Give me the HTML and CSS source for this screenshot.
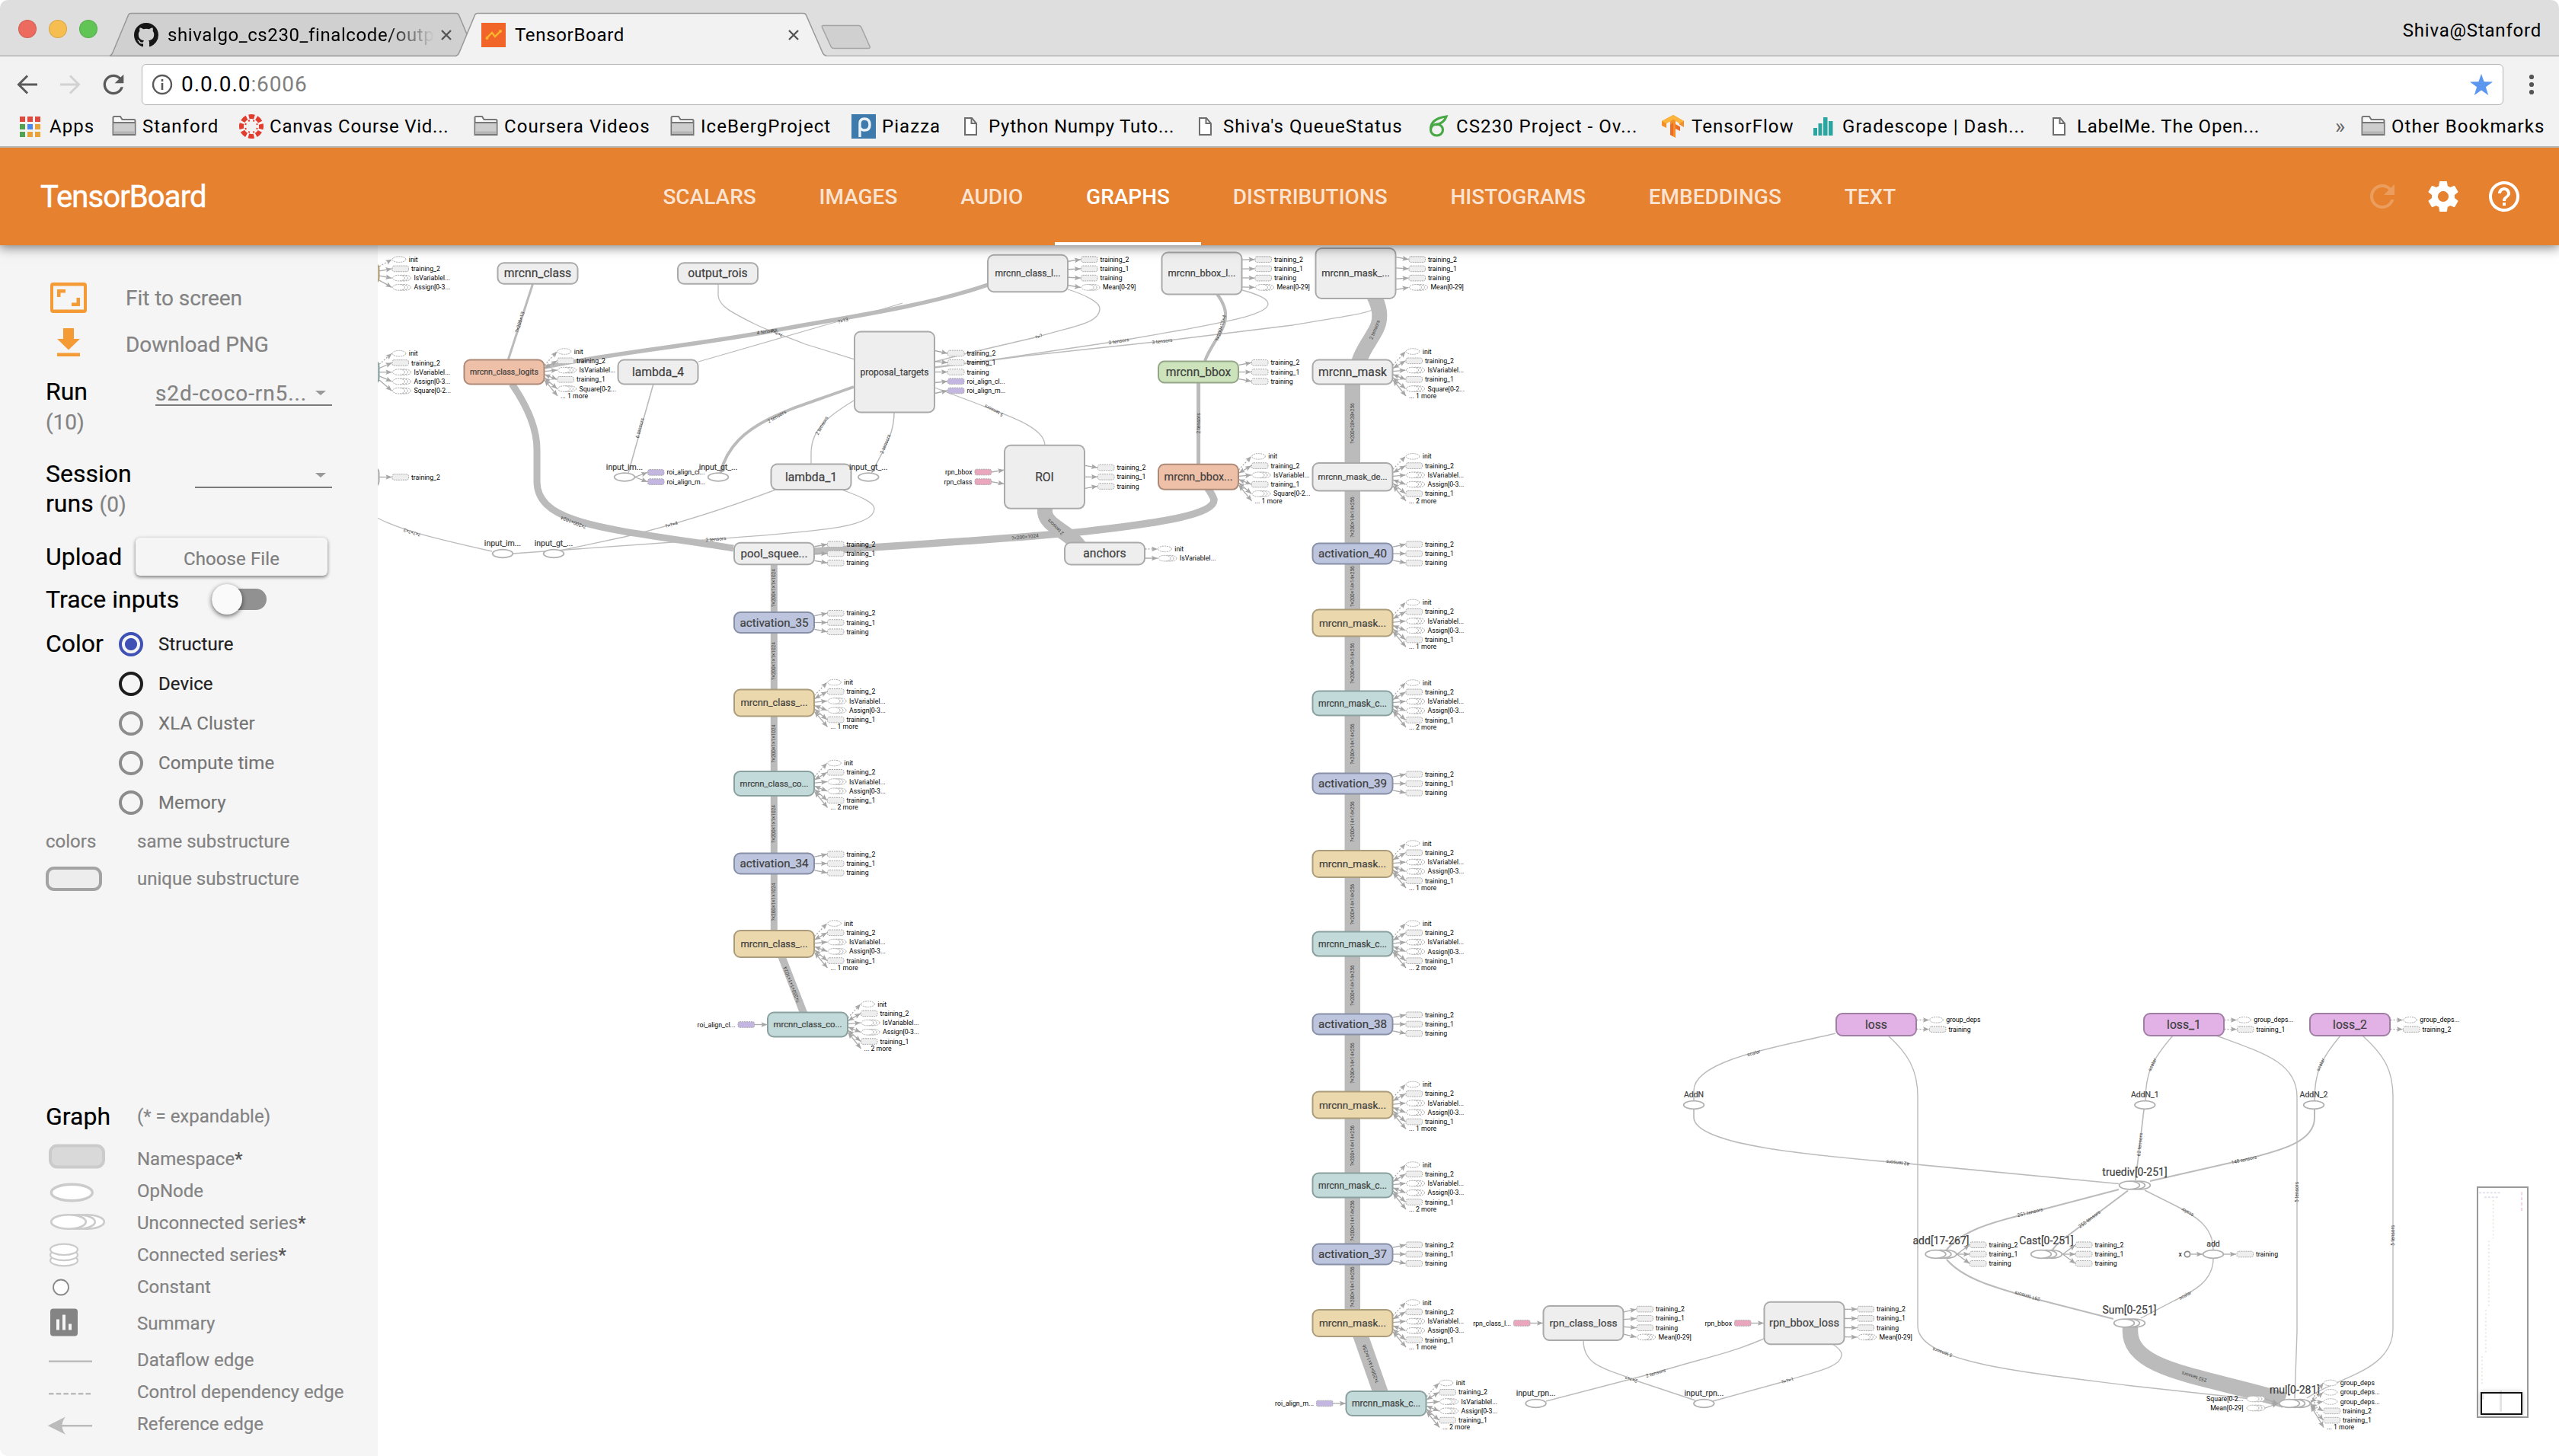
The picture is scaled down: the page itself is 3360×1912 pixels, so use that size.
FILE: index.html
```html
<!DOCTYPE html>
<html lang="en">
<head>
<meta charset="utf-8">
<title>TensorBoard</title>
<link rel="stylesheet" href="styles.css">
</head>
<body>
<svg class="defs" width="0" height="0" aria-hidden="true">
  <symbol id="folder" viewBox="0 0 32 32"><path d="M1.5 27V4.500Q1.500 3 3 3H11L13.500 7H29Q30.500 7 30.500 8.500V27Z" fill="#fafafa" stroke="#777" stroke-width="2"/><path d="M2.500 11H29.500V26H2.500Z" fill="#cdcdcd"/><path d="M2 11H30" stroke="#777" stroke-width="2"/><path d="M2.500 22.500H29.500V26H2.500Z" fill="#b5b5b5"/></symbol>
  <symbol id="page" viewBox="0 0 24 32"><path d="M1 5H10L16 12V27H1Z" fill="#fff" stroke="#6e6e6e" stroke-width="2"/><path d="M9.500 5V12H16" fill="none" stroke="#6e6e6e" stroke-width="2"/></symbol>
  <symbol id="refresh" viewBox="0 0 24 24"><path d="M17.65 6.350C16.200 4.900 14.210 4 12 4c-4.420 0-7.990 3.580-7.990 8s3.570 8 7.990 8c3.730 0 6.840-2.550 7.730-6h-2.080c-.82 2.330-3.040 4-5.650 4-3.310 0-6-2.690-6-6s2.690-6 6-6c1.660 0 3.140.69 4.220 1.780L13 11h7V4l-2.350 2.350z"/></symbol>
</svg>

<header class="chrome">
  <div class="tabstrip">
    <svg class="tab-shapes" viewBox="0 0 1200 75">
      <path d="M144 73.500Q147 72 148 69L168 21Q169 17.500 172 17.500H599Q602 17.500 603 21L625 73.500Z" fill="#d0d0d0" stroke="#989898" stroke-width="1.500"/>
      <path d="M1081 33.500H1127Q1130 33.500 1131 36L1142 61Q1143 63.500 1140 63.500H1095Q1092 63.500 1091 61L1079.500 36Q1078.500 33.500 1081 33.500Z" fill="#d0d0d0" stroke="#a4a4a4" stroke-width="1.500"/>
      <path d="M599 76V73.500Q602 72 603 69L623 21Q624 17.500 627 17.500H1055Q1058 17.500 1059 21L1080 69Q1081 72 1085 73.500V76Z" fill="#f2f2f2"/>
      <path d="M599 73.500Q602 72 603 69L623 21Q624 17.500 627 17.500H1055Q1058 17.500 1059 21L1080 69Q1081 72 1085 73.500" fill="none" stroke="#989898" stroke-width="1.500"/>
    </svg>
    <div class="lights"><i class="red"></i><i class="amber"></i><i class="green"></i></div>
    <div class="tab first">
      <svg width="32" height="32" viewBox="0 0 16 16"><path fill="#151515" d="M8 0C3.580 0 0 3.580 0 8c0 3.540 2.290 6.530 5.470 7.590.4.070.55-.17.55-.38 0-.19-.01-.82-.01-1.490-2.010.37-2.530-.49-2.690-.94-.09-.23-.48-.94-.82-1.130-.28-.15-.68-.52-.01-.53.63-.01 1.080.58 1.230.82.72 1.210 1.870.87 2.330.66.070-.52.28-.87.51-1.070-1.780-.2-3.640-.89-3.640-3.950 0-.87.31-1.590.82-2.150-.08-.2-.36-1.020.08-2.120 0 0 .67-.21 2.200.82.64-.18 1.320-.27 2-.27s1.360.09 2 .27c1.530-1.040 2.200-.82 2.200-.82.44 1.100.16 1.920.08 2.120.51.56.82 1.270.82 2.150 0 3.070-1.870 3.750-3.650 3.950.29.25.54.73.54 1.480 0 1.070-.01 1.930-.01 2.200 0 .21.15.46.55.38A8.010 8.010 0 0 0 16 8c0-4.420-3.580-8-8-8z"/></svg>
      <span class="title fade">shivalgo_cs230_finalcode/outp</span>
      <svg class="close" viewBox="0 0 14 14"><path d="M1 1L13 13M13 1L1 13" stroke="#555" stroke-width="2.400"/></svg>
    </div>
    <div class="tab second">
      <svg width="32" height="32" viewBox="0 0 32 32"><rect width="32" height="32" fill="#f26529"/><path d="M7 20L14 13L18 18L25 11" fill="none" stroke="#fcb72b" stroke-width="2.400"/><circle cx="7.500" cy="20" r="2" fill="#fcb72b"/><circle cx="25" cy="11" r="2" fill="#fcb72b"/></svg>
      <span class="title">TensorBoard</span>
      <svg class="close" viewBox="0 0 14 14"><path d="M1 1L13 13M13 1L1 13" stroke="#555" stroke-width="2.400"/></svg>
    </div>
    <span class="profile">Shiva@Stanford</span>
  </div>

  <div class="toolbar">
    <svg class="nav" viewBox="0 0 28 28"><path d="M27 14H3M14 2.500L2.500 14L14 25.500" fill="none" stroke="#5a5a5a" stroke-width="3"/></svg>
    <svg class="nav" viewBox="0 0 28 28"><path d="M1 14H25M14 2.500L25.500 14L14 25.500" fill="none" stroke="#d2d2d2" stroke-width="3"/></svg>
    <svg class="reload" viewBox="3 3 18 18" fill="#5a5a5a"><use href="#refresh" width="24" height="24"/></svg>
    <div class="omnibox">
      <svg width="28" height="28" viewBox="0 0 28 28"><circle cx="14" cy="14" r="12" fill="none" stroke="#5a5a5a" stroke-width="2.400"/><path d="M14 12V21M14 7V10" stroke="#5a5a5a" stroke-width="2.600"/></svg>
      <span class="url">0.0.0.0<em>:6006</em></span>
      <svg class="star" viewBox="0 0 30 28"><path fill="#5b97ee" d="M15 0L18.600 10.200L30 10.600L20.900 17.200L24.200 28L15 21.500L5.800 28L9.100 17.200L0 10.600L11.400 10.200Z"/></svg>
    </div>
    <svg class="dots" viewBox="0 0 8 28" fill="#555"><circle cx="4" cy="4" r="3.100"/><circle cx="4" cy="14" r="3.100"/><circle cx="4" cy="24" r="3.100"/></svg>
  </div>

  <nav class="bookmarks">
    <span class="bm"><svg width="31" height="32" viewBox="0 0 31 32"><path fill="#e0493e" d="M0 3h7v7H0zM10 3h7v7h-7zM20 3h7v7h-7z"/><path fill="#51a351" d="M0 13h7v7H0zM0 23h7v7H0z"/><path fill="#4a87ee" d="M10 13h7v7h-7z"/><path fill="#e8a33b" d="M20 13h7v7h-7zM10 23h7v7h-7zM20 23h7v7h-7z"/></svg>Apps</span>
    <span class="bm"><svg width="32" height="32"><use href="#folder"/></svg>Stanford</span>
    <span class="bm tight"><svg width="32" height="32" viewBox="0 0 32 32"><circle cx="16" cy="16" r="13" fill="none" stroke="#e23c2f" stroke-width="6" stroke-dasharray="7.200 3.010" stroke-dashoffset="3.600"/><circle cx="16" cy="16" r="8" fill="none" stroke="#e23c2f" stroke-width="2" stroke-dasharray="2 4.280" stroke-dashoffset="-2"/></svg>Canvas Course Vid...</span>
    <span class="bm"><svg width="32" height="32"><use href="#folder"/></svg>Coursera Videos</span>
    <span class="bm"><svg width="32" height="32"><use href="#folder"/></svg>IceBergProject</span>
    <span class="bm"><svg width="32" height="32" viewBox="0 0 32 32"><rect width="32" height="32" fill="#3e7aab"/><path d="M11 30V12Q11 6 17 6Q24 6 24 14Q24 21 17 21Q13 21 12 18" fill="none" stroke="#eaf2f8" stroke-width="3.400"/></svg>Piazza</span>
    <span class="bm tight"><svg width="24" height="32"><use href="#page"/></svg>Python Numpy Tuto...</span>
    <span class="bm"><svg width="24" height="32"><use href="#page"/></svg>Shiva's QueueStatus</span>
    <span class="bm"><svg width="28" height="32" viewBox="0 0 28 32"><ellipse cx="10.500" cy="20.500" rx="8" ry="7.500" fill="none" stroke="#48a845" stroke-width="3.200"/><path d="M2.500 20Q2 6 23 3Q20 12 9 14" fill="none" stroke="#48a845" stroke-width="3.200"/></svg>CS230 Project - Ov...</span>
    <span class="bm"><svg width="32" height="32" viewBox="0 0 32 32"><path fill="#f4902c" d="M16 1L30 9V17L24 13.500V11L19 8.500V31L12 27V9L7 12V18L1 15V9Z"/><path fill="#fdb43c" d="M16 1L30 9L24 12L16 7L7 12L1 9Z"/><path fill="#ee6d24" d="M19 13L25 16.500V22L19 19ZM12 14V27L16 29V11Z"/></svg>TensorFlow</span>
    <span class="bm"><svg width="30" height="32" viewBox="0 0 30 32" fill="#2aa5a0"><path d="M0 18h5v10H0zM6.500 12h5v16h-5zM13 4h5.500v24H13zM20 9h5.500v19H20z"/></svg>Gradescope | Dash...</span>
    <span class="bm tight"><svg width="24" height="32"><use href="#page"/></svg>LabelMe. The Open...</span>
    <span class="bm more">»</span>
    <span class="bm"><svg width="32" height="32"><use href="#folder"/></svg>Other Bookmarks</span>
  </nav>
</header>

<div class="appbar">
  <h1>TensorBoard</h1>
  <nav class="apptabs">
    <a>SCALARS</a><a>IMAGES</a><a>AUDIO</a><a class="on">GRAPHS</a><a>DISTRIBUTIONS</a><a>HISTOGRAMS</a><a>EMBEDDINGS</a><a>TEXT</a>
  </nav>
  <div class="actions">
    <svg class="dim" viewBox="0 0 24 24"><use href="#refresh"/></svg>
    <svg viewBox="0 0 24 24"><path d="M19.430 12.980c.04-.32.070-.64.070-.98s-.03-.66-.07-.98l2.110-1.650c.19-.15.240-.42.120-.64l-2-3.460c-.12-.22-.39-.3-.61-.22l-2.490 1c-.52-.4-1.080-.73-1.690-.98l-.38-2.650C14.460 2.180 14.250 2 14 2h-4c-.25 0-.46.180-.49.420l-.38 2.650c-.61.250-1.170.590-1.690.98l-2.490-1c-.23-.09-.49 0-.61.220l-2 3.460c-.13.220-.07.490.120.640l2.110 1.650c-.04.320-.07.650-.07.980s.03.660.07.980l-2.110 1.650c-.19.150-.24.420-.12.640l2 3.460c.12.220.39.3.61.220l2.490-1c.52.4 1.080.73 1.690.98l.38 2.650c.03.240.24.420.49.420h4c.25 0 .46-.18.490-.42l.38-2.650c.61-.25 1.170-.59 1.690-.98l2.490 1c.23.090.49 0 .61-.22l2-3.460c.12-.22.070-.49-.12-.64l-2.110-1.650zM12 15.500c-1.930 0-3.500-1.570-3.500-3.500s1.570-3.500 3.500-3.500 3.500 1.570 3.500 3.500-1.570 3.500-3.500 3.500z"/></svg>
    <svg viewBox="0 0 24 24"><path d="M11 18h2v-2h-2v2zm1-16C6.480 2 2 6.480 2 12s4.480 10 10 10 10-4.480 10-10S17.520 2 12 2zm0 18c-4.410 0-8-3.590-8-8s3.590-8 8-8 8 3.590 8 8-3.590 8-8 8zm0-14c-2.210 0-4 1.790-4 4h2c0-1.100.9-2 2-2s2 .9 2 2c0 2-3 1.750-3 5h2c0-2.250 3-2.500 3-5 0-2.210-1.790-4-4-4z"/></svg>
  </div>
</div>

<main class="board">
  <aside class="side">
    <div class="tool"><svg width="48" height="40" viewBox="0 0 48 40" fill="#f49b35"><path fill-rule="evenodd" d="M4 0H44Q48 0 48 4V36Q48 40 44 40H4Q0 40 0 36V4Q0 0 4 0ZM4 4.500V35.500H44V4.500Z"/><path d="M9 9H20V13.500H13.500V19H9ZM39 31H28V26.500H34.500V20H39Z"/></svg><span>Fit to screen</span></div>
    <div class="tool dl"><svg width="48" height="40" viewBox="0 0 48 40" fill="#f49b35"><path d="M17 0H31V14H39L24 28.500L9 14H17ZM9 32.500H39V37H9Z"/></svg><span>Download PNG</span></div>

    <div class="pick"><div class="lbl">Run<br><small>(10)</small></div><div class="select run">s2d-coco-rn5...<i></i></div></div>
    <div class="pick second"><div class="lbl">Session<br>runs <small>(0)</small></div><div class="select session"><i></i></div></div>
    <div class="row upload"><span class="lbl">Upload</span><button>Choose File</button></div>
    <div class="row trace"><span class="lbl">Trace inputs</span><span class="toggle"><b></b></span></div>
    <div class="colorby">
      <span class="lbl">Color</span>
      <ul>
        <li class="sel"><i></i>Structure</li>
        <li class="act"><i></i>Device</li>
        <li><i></i>XLA Cluster</li>
        <li><i></i>Compute time</li>
        <li><i></i>Memory</li>
      </ul>
    </div>
    <div class="key"><span>colors</span><span>same substructure</span></div>
    <div class="key"><span><i class="chip"></i></span><span>unique substructure</span></div>

    <section class="legend">
      <div class="lg head"><span class="lbl">Graph</span><span>(* = expandable)</span></div>
      <div class="lg"><svg><rect x="6" y="3.500" width="70" height="28" rx="9" fill="#d9d9d9" stroke="#cbcbcb" stroke-width="4"/></svg><span>Namespace<b>*</b></span></div>
      <div class="lg"><svg><ellipse cx="34.300" cy="23" rx="27" ry="10.800" fill="#fff" stroke="#cbcbcb" stroke-width="3.400"/></svg><span>OpNode</span></div>
      <div class="lg"><svg fill="#fff" stroke="#cbcbcb" stroke-width="2.600"><ellipse cx="54" cy="19.500" rx="22.800" ry="9.200"/><ellipse cx="42" cy="19.500" rx="22.800" ry="9.200"/><ellipse cx="30" cy="19.500" rx="22.800" ry="9.200"/></svg><span>Unconnected series<b>*</b></span></div>
      <div class="lg"><svg fill="#fff" stroke="#cbcbcb" stroke-width="2.200"><ellipse cx="24" cy="28.200" rx="18" ry="7.200"/><ellipse cx="24" cy="21" rx="18" ry="7.200"/><ellipse cx="24" cy="13.800" rx="18" ry="7.200"/></svg><span>Connected series<b>*</b></span></div>
      <div class="lg"><svg><circle cx="20" cy="21.500" r="10" fill="#fff" stroke="#888" stroke-width="1.800"/></svg><span>Constant</span></div>
      <div class="lg tall"><svg><rect x="6" y="7.500" width="36" height="36" rx="4" fill="#848484"/><path d="M14 21.500h4v14h-4zM22 15.500h4v20h-4zM30 27.500h4v8h-4z" fill="#f5f5f5"/></svg><span>Summary</span></div>
      <div class="lg"><svg><path d="M4 22.800H61" stroke="#bbb" stroke-width="2.600"/></svg><span>Dataflow edge</span></div>
      <div class="lg"><svg><path d="M4 23.200H61" stroke="#bbb" stroke-width="2.600" stroke-dasharray="6.500 3.200"/></svg><span>Control dependency edge</span></div>
      <div class="lg"><svg><path d="M14 23.200H61" stroke="#bbb" stroke-width="2.600"/><path d="M2.700 23.200L26 11.500Q17 23 26 34.800Z" fill="#bbb"/></svg><span>Reference edge</span></div>
    </section>
  </aside>

  <div class="canvas">
    <svg id="graph" viewBox="496 322 2864 1590"></svg>
    <div class="minimap">
      <svg viewBox="0 0 65 300" fill="none">
        <path d="M1 4H30M8 10H28" stroke="#c9c4dd" stroke-width="2" stroke-dasharray="3 2" opacity=".5"/>
        <path d="M58 3V28" stroke="#e3b6d6" stroke-width="2" stroke-dasharray="4 3" opacity=".6"/>
        <path d="M20 14V65M14 68V158M10 160V220M5 222V262" stroke="#dcdccb" stroke-width="2" stroke-dasharray="2 3" opacity=".6"/>
        <path d="M30 268V296M6 270V280" stroke="#e4e4e4" stroke-width="3"/>
      </svg>
      <i class="viewport"></i>
    </div>
  </div>
</main>
<script src="graph.js"></script>
</body>
</html>
```
FILE: styles.css
```css
* { box-sizing: border-box; }
html { background: #fff; }
body { margin: 0; width: 3360px; height: 1912px; overflow: hidden; display: flex; flex-direction: column; font-family: Roboto, "Liberation Sans", sans-serif; background: #f2f2f2; border-radius: 10px; }
.defs { position: absolute; }

/* browser window */
.chrome { position: relative; z-index: 3; height: 194px; background: #f2f2f2; border-bottom: 2px solid #b7b3af; border-radius: 10px 10px 0 0; color: #000; font-size: 24px; letter-spacing: .68px; flex: none; }
.tabstrip { position: relative; height: 74px; background: #dedede; border-bottom: 1.5px solid #989898; display: flex; align-items: flex-start; border-radius: 10px 10px 0 0; }
.tab-shapes { position: absolute; left: 0; top: 0; width: 1200px; height: 75px; }
.lights { display: flex; gap: 16px; padding: 26px 0 0 24px; width: 176px; }
.lights i { width: 24px; height: 24px; border-radius: 50%; border: 1px solid rgba(0,0,0,.12); }
.red { background: #ed6a5f; }
.amber { background: #f6be50; }
.green { background: #61c555; }
.tab { position: relative; display: flex; align-items: center; height: 32px; margin-top: 30px; }
.tab.first { width: 456px; }
.tab.second { width: 417px; }
.title { padding-left: 12px; flex: 1; white-space: nowrap; line-height: 32px; overflow: hidden; }
.first .title { flex: none; width: 362px; letter-spacing: .6px; }
.fade { -webkit-mask-image: linear-gradient(90deg, #000 82%, transparent 100%); mask-image: linear-gradient(90deg, #000 82%, transparent 100%); }
.close { width: 14px; height: 14px; }
.first .close { margin-left: 9px; }
.profile { margin: 25px 23px 0 auto; line-height: 30px; letter-spacing: .78px; }
.toolbar { height: 70px; display: flex; align-items: center; padding: 3px 32px 0 22px; }
.nav { width: 28px; height: 28px; margin-right: 28px; }
.reload { width: 30px; height: 30px; margin-right: 22px; }
.omnibox { width: 3101px; height: 54px; background: #fff; border: 1.5px solid #b4b4b4; border-radius: 6px; display: flex; align-items: center; padding: 0 13px 0 12px; }
.url { flex: 1; font-size: 28px; letter-spacing: .9px; padding-left: 11px; }
.url em { color: #808080; font-style: normal; }
.star { width: 30px; height: 28px; }
.dots { width: 8px; height: 28px; margin-left: auto; }
.bookmarks { display: grid; grid-template-columns: 121px 167px 308px 258px 238px 148px 308px 302px 305px 200px 314px 371px 34px 1fr; padding-left: 26px; height: 43px; align-items: center; }
.bm { display: flex; align-items: center; gap: 8px; white-space: nowrap; letter-spacing: 1.05px; }
.bm.tight { letter-spacing: .76px; }
.bm svg { flex: none; }
.bm.more { color: #666; font-size: 28px; line-height: 30px; }

/* application bar */
.appbar { position: relative; z-index: 2; flex: none; height: 128px; background: #e6812f; color: #fff; display: flex; align-items: center; box-shadow: 0 2px 14px 1px rgba(0,0,0,.5); padding: 0 48px 0 53px; }
.appbar h1 { margin: 0; font-size: 40px; font-weight: 400; letter-spacing: -.9px; width: 776px; -webkit-text-stroke: .5px #fff; }
.apptabs { display: flex; height: 100%; }
.apptabs a { padding: 0 41.4px; font-size: 28px; font-weight: 500; line-height: 129px; color: rgba(255,255,255,.78); }
.apptabs .on { color: #fff; box-shadow: inset 0 -4px #fff; }
.actions { margin-left: auto; display: flex; gap: 32px; }
.actions svg { width: 48px; height: 48px; fill: #fff; }
.actions .dim { opacity: .22; }

/* sidebar */
.board { flex: 1; display: flex; min-height: 0; background: #fff; }
.side { width: 496px; flex: none; background: #f5f5f5; padding: 39px 60px 0; color: #838383; font-size: 24px; border-radius: 0 0 0 10px; -webkit-text-stroke: .2px; }
.tool { display: flex; align-items: center; height: 60px; padding-left: 6px; gap: 51px; font-size: 28px; letter-spacing: -.05px; }
.tool.dl { height: 62px; }
.tool.dl svg { position: relative; top: -1px; }
.lbl { color: #000; font-size: 32px; }
.lbl small { color: #838383; font-size: 28px; }
.pick { display: flex; justify-content: space-between; height: 108px; padding-top: 12px; line-height: 39px; }
.select { position: relative; height: 38px; border-bottom: 2px solid #7a7a7a; font-size: 28px; color: #838383; line-height: 44px; letter-spacing: .9px; }
.select i { position: absolute; right: 8px; top: 18px; border: 7px solid transparent; border-top: 6px solid #999; border-bottom: 0; }
.run { width: 232px; }
.session { width: 180px; }
.row { display: flex; align-items: center; height: 56px; }
.upload { margin-top: 4px; }
.upload .lbl { width: 118px; }
.upload button { width: 252px; height: 50px; margin: 0; border: 0; border-radius: 6px; background: #f5f5f5; color: #7d7d7d; font: 24px Roboto, sans-serif; padding: 5px 0 0; box-shadow: 0 2px 4px rgba(0,0,0,.42), 0 1px 6px rgba(0,0,0,.12); letter-spacing: .1px; }
.trace .lbl { width: 218px; }
.toggle { width: 72px; height: 28px; border-radius: 14px; background: #919191; display: flex; align-items: center; }
.toggle b { width: 40px; height: 40px; flex: none; border-radius: 50%; background: #fafafa; box-shadow: 0 2px 6px rgba(0,0,0,.6); }
.colorby { display: flex; height: 265px; padding-top: 2px; }
.colorby .lbl { width: 96px; line-height: 54px; padding-top: 1px; }
.colorby ul { list-style: none; margin: 3px 0 0; padding: 0; }
.colorby li { display: flex; align-items: center; height: 52.1px; gap: 20px; color: #757575; letter-spacing: .1px; }
.colorby li i { width: 32px; height: 32px; border-radius: 50%; border: 4px solid #8c8c8c; display: flex; }
.colorby .act, .colorby .sel { color: #212121; }
.colorby .act i { border-color: #1d1d1d; }
.colorby .sel i { border-color: #3f51b5; background: radial-gradient(circle, #3f51b5 7.500px, transparent 8.500px); }
.key { display: flex; align-items: center; height: 49.5px; }
.key span:first-child { width: 120px; }
.chip { display: block; width: 74px; height: 32px; border: 4px solid #a3a3a3; border-radius: 11px; background: #ededed; }
.legend { margin-top: 266px; }
.lg { display: flex; align-items: center; height: 42px; white-space: nowrap; }
.lg svg { width: 120px; height: 100%; flex: none; }
.lg.tall { height: 54px; }
.lg.head { margin-bottom: 14px; }
.lg b { font-weight: 400; color: #555; }
.head .lbl { width: 120px; }

/* graph canvas */
.canvas { position: relative; flex: 1; }
#graph { display: block; width: 2864px; height: 1590px; font-family: Roboto, "Liberation Sans", sans-serif; }
.edge { fill: none; stroke: #bbb; }
.elabel { font-size: 6.500px; fill: #444; text-anchor: middle; }
.nlabel { fill: #3f3f3f; text-anchor: middle; stroke: #3f3f3f; stroke-width: .2px; }
.alabel { font-size: 8.700px; fill: #000; }
.box { stroke-width: 2; }
.op { fill: #fff; stroke: #b0b0b0; stroke-width: 1.700; }
.op.const { stroke: #888; }
.abox { stroke: #aaa; stroke-width: 1; stroke-dasharray: 2 1; }
.aline { fill: none; stroke: #aaa; stroke-width: 1.300; }
.aline.dash { stroke-dasharray: 2 2; }
.ahead { fill: #a6a6a6; }
.minimap { position: absolute; left: 2756px; top: 1236px; width: 68px; height: 304px; border: 2px solid #999; background: #fff; }
.minimap svg { width: 64px; height: 300px; display: block; }
.viewport { position: absolute; left: 3px; top: 268px; width: 55px; height: 30px; border: 2px solid #111; box-shadow: 0 0 6px rgba(0,0,0,.25); }
```
FILE: graph.js
```js
const NS = 'http://www.w3.org/2000/svg';
const root = document.getElementById('graph');

function el(name, attrs, text) {
  const e = document.createElementNS(NS, name);
  for (const k in attrs) e.setAttribute(k, attrs[k]);
  if (text !== undefined) e.textContent = text;
  root.appendChild(e);
  return e;
}

const PALETTE = {
  grey: ['#eeeeee', '#aaaaaa'], orange: ['#efc0a8', '#ad8a78'], green: ['#cce3bb', '#94a588'],
  blue: ['#bcc5dd', '#8790a6'], yellow: ['#ecd8ad', '#ab9c7b'], teal: ['#c2dad9', '#8aa09f'],
  pink: ['#e2b2e6', '#a17fa5']
};

// edges: path, stroke width
const edges = [
  ['M699.500 373L667.400 472', 3],
  ['M943 373V388C944 402 960 410 990 425C1010 435 1030 441 1056 451.500L1121 471.700', 1.3],
  ['M1297 374C1210 404 1100 418 1006 436C900 455 800 464 716 482', 5.5],
  ['M917 475L1090 425Q1150 409 1185 398', 1.3],
  ['M1402 380C1425 387 1444 397 1444 405C1444 425 1410 428 1364 442L1274 463L1227 475', 1.3],
  ['M1631 381C1650 386 1665 392 1665 399C1665 414 1600 424 1548 434L1468 448L1300 473L1227 482', 1.3],
  ['M1802 407C1790 412 1770 415 1697 427L1526 448L1349 467L1227 483', 1.3],
  ['M1598 386C1607 398 1610 408 1609 417C1608 435 1590 452 1582 474', 4],
  ['M1804 388C1811 403 1813 413 1810 425C1806 440 1790 455 1784 476', 20],
  ['M1775.800 500V1737', 20.5],
  ['M1573.600 503V610', 5],
  ['M1784 1747L1815 1835', 20],
  ['M1016.300 740V1240', 9],
  ['M1024 1250L1057 1335', 10],
  ['M672 504C690 530 705 560 705 590V632C705 690 800 694 963 720', 9],
  ['M1069 724C1150 718 1300 710 1424 698C1530 686 1595 675 1594 656Q1592 650 1585 640', 9.5],
  ['M1372 665V673C1374 692 1405 697 1420 722', 20],
  ['M1227 509L1275 527C1320 545 1372 560 1372 585', 1.3],
  ['M858 504L825 621', 1.6],
  ['M1121 508C1060 530 1040 535 1010 550C980 565 955 585 946 621', 3.8],
  ['M1121 526C1090 545 1065 562 1065 595V610', 1.3],
  ['M1174 541C1174 570 1163 585 1144 622', 1.5],
  ['M1018.500 643C960 665 890 688 820 705L731 724', 1.3],
  ['M1105 643C1130 652 1148 660 1148 668C1148 695 1060 698 940 708L673 727', 1.3],
  ['M490 677C520 695 570 707 646 724', 1.3],
  ['M2410 1357C2350 1372 2224 1390 2224 1432V1445', 1.4],
  ['M2224 1457V1467C2224 1505 2390 1518 2500 1527.500L2782 1554.500', 1.7],
  ['M2479 1360C2505 1383 2518 1405 2518 1440V1741C2518 1790 2660 1802 2800 1820L2992 1841', 1.4],
  ['M2556 1641C2580 1612 2630 1602 2660 1594L2782 1562', 2.1],
  ['M2695 1641Q2702 1632 2712 1625L2794 1563.500', 2.1],
  ['M2556 1654C2580 1682 2630 1693 2662 1703L2775 1732', 2.1],
  ['M2853 1360C2825 1392 2817 1410 2817 1445', 1.4],
  ['M2815 1457L2804 1550', 1.7],
  ['M2910 1360C2970 1382 3016 1395 3016 1440V1749L3013 1836', 1.4],
  ['M3039 1457V1468C3039 1502 2985 1513 2946 1523L2823 1551', 2],
  ['M3073 1360C3046 1392 3039 1410 3039 1445', 1.4],
  ['M3102 1360C3130 1385 3142 1405 3142 1440V1745C3142 1800 3070 1808 3029 1836', 1.4],
  ['M2816 1563L2850 1580C2885 1597 2906 1612 2906 1641', 1.4],
  ['M2906 1653C2906 1682 2880 1696 2855 1708L2811 1731', 1.4],
  ['M2797 1740V1748C2797 1800 2890 1806 3000 1839', 20.5],
  ['M2079 1760C2079 1795 2110 1797 2145 1812L2226 1839', 1.4],
  ['M2316 1758C2270 1778 2230 1785 2176 1802L2030 1840', 1.4],
  ['M2406 1765Q2419 1773 2418 1780C2416 1798 2370 1804 2347 1813L2249 1840', 1.4]
];
edges.forEach(([d, w]) => el('path', { class: 'edge', d, 'stroke-width': w }));

// edge captions: text, x, y, rotation
const M = '?×200×14×14×256', C = '?×200×1×1×1024';
const captions = [
  ['?×200×13', 682.5, 423, -73], ['?×?×4', 1020, 437, 205], ['4 tensors', 1007, 435, -10], ['?×13', 1107, 421, -17],
  ['?×?', 1364, 442, -19], ['2 tensors', 1469, 448, -9], ['3 tensors', 1526, 448, -7], ['?×200×13×4', 1603, 431, -74],
  ['2 tensors', 1805, 433, -68], ['?×200×28×28×256', 1775.7, 556, -90], [M, 1775.7, 679, -90], [M, 1775.7, 770, -90],
  [M, 1775.7, 871, -90], [M, 1775.7, 977, -90], [M, 1775.7, 1079, -90], [M, 1775.7, 1187.5, -90], [M, 1775.7, 1294, -90],
  [M, 1775.7, 1396, -90], [M, 1775.7, 1504.5, -90], [M, 1775.7, 1603, -90], [M, 1775.7, 1690, -90], [M, 1799.6, 1791, -110],
  ['2 tensors', 1573.5, 556, -90], [C, 1016, 772, -90], [C, 1016, 868, -90], [C, 1016, 976.6, -90], [C, 1016, 1082, -90],
  [C, 1016, 1184.6, -90], [C, 1039.5, 1293, -111], ['?×200×1024', 753, 686, 202], ['?×200×1024', 1346, 705, -6],
  ['2 tensors', 1386, 692, 225], ['5 tensors', 1305, 539, 207], ['6 tensors', 840, 562, -75], ['2 tensors', 1020, 547, -30],
  ['2 tensors', 1079, 559, -60], ['2 tensors', 1162.5, 583, -68], ['?×?×4', 881.7, 689, -17], ['2 tensors', 940, 708, -5],
  ['?×?×?×3', 541, 699, 197], ['scalar', 2302.6, 1382.7, -16], ['42 tensors', 2492, 1527, 185], ['5 tensors', 2550.5, 1776, 199],
  ['251 tensors', 2665.5, 1592, -14], ['252 tensors', 2743.5, 1601, -37], ['251 tensors', 2662, 1702, 195], ['scalar', 2826, 1398, -64],
  ['62 tensors', 2809.6, 1503, -84], ['5 tensors', 3016, 1565.4, -90], ['148 tensors', 2946.4, 1523, -13], ['scalar', 3047, 1398, -64],
  ['5 tensors', 3142, 1622.4, -90], ['scalar', 2872, 1592, 210], ['scalar', 2869, 1701, -27], ['252 tensors', 2881, 1808, 197],
  ['2×?×?', 2142, 1811, 200], ['2 tensors', 2174, 1803, -17], ['?×?×1', 2347, 1813, -17]
];
captions.forEach(([t, x, y, a]) =>
  el('text', { class: 'elabel', x: 0, y: 2.2, transform: `translate(${x} ${y}) rotate(${a})` }, t));

function arrow(x1, y1, x2, y2, dash, both) {
  el('path', { class: 'aline' + (dash ? ' dash' : ''), d: `M${x1} ${y1}L${x2} ${y2}` });
  const head = (x, y, a) => el('path', { class: 'ahead', d: 'M0 0L-8 -3.300L-6.500 0L-8 3.300Z', transform: `translate(${x} ${y}) rotate(${a})` });
  const a = Math.atan2(y2 - y1, x2 - x1) * 180 / Math.PI;
  head(x2, y2, a);
  if (both) head(x1, y1, a + 180);
}

const SMALL = { r: '#eeeeee', v: '#c3b6e0', p: '#e9a6bd' };
// row kinds: r rect, v violet rect, p pink rect, e ellipse, s series
function glyph(kind, x, y) {
  if (kind === 'e') { el('ellipse', { class: 'abox', cx: x + 9, cy: y, rx: 8.8, ry: 3.8, fill: '#fff' }); return 38.8; }
  if (kind === 's') {
    [8, 4, 0].forEach(o => el('ellipse', { class: 'abox', cx: x + 8.5 + o, cy: y, rx: 8, ry: 3.8, fill: '#fff' }));
    return 45.5;
  }
  el('rect', { class: 'abox', x, y: y - 3.8, width: 21.5, height: 7.6, rx: 2.5, fill: SMALL[kind] });
  return 42;
}

const STEP = 12.25;
// outgoing annotations beside a node; spread is the vertical reach on the node's edge
function outs(x, cy, h, rows, more, spread) {
  const n = rows.length, shift = more ? 2.2 : (n - 1) / 2;
  const k = spread !== undefined ? spread : h * .325;
  const max = Math.max(more ? 31 : shift * STEP, 1);
  rows.forEach(([kind, text, dash], i) => {
    const dy = (i - shift) * STEP, y = cy + dy;
    arrow(x, cy + dy / max * k, x + 16.500, y, dash, more && (i === 1 || i > 2));
    const off = glyph(kind, x + 17, y);
    el('text', { class: 'alabel', x: x + off, y: y + 3.1 }, text);
  });
  if (more) {
    arrow(x, cy + k, x + 17, cy + 31.5, false, true);
    el('text', { class: 'alabel', x: x + 21, y: cy + 34.2 }, '... ' + more + ' more');
  }
}
function ins(x, cy, rows, k) {
  rows.forEach(([kind, text], i) => {
    const dy = (i - (rows.length - 1) / 2) * 12.6;
    arrow(x - 17, cy + dy, x, cy + dy * k, false, false);
    el('rect', { class: 'abox', x: x - 38.5, y: cy + dy - 3.8, width: 21.5, height: 7.6, rx: 2, fill: SMALL[kind] });
    el('text', { class: 'alabel', x: x - 42, y: cy + dy + 3.1, 'text-anchor': 'end' }, text);
  });
}

function fitted(cls, text, cx, cy, width, cap) {
  const t = el('text', { class: cls, x: cx, y: 0, 'font-size': 100 }, text);
  const fs = Math.min(cap, width / t.getComputedTextLength() * 100);
  t.setAttribute('font-size', fs);
  t.setAttribute('y', cy + fs * .345);
}

const T3 = [['r', 'training_2'], ['r', 'training_1'], ['r', 'training']];
const T4 = [...T3, ['s', 'Mean[0-29]']];
const SQ = [['e', 'init', 1], ['r', 'training_2'], ['s', 'IsVariableI...'], ['r', 'training_1'], ['s', 'Square[0-2...']];
const AS = [['e', 'init', 1], ['r', 'training_2'], ['s', 'IsVariableI...'], ['s', 'Assign[0-3...'], ['r', 'training_1']];
const ASQ = [['e', 'init', 1], ['r', 'training_2'], ['s', 'IsVariableI...'], ['s', 'Assign[0-3...'], ['s', 'Square[0-2...']];

// nodes: label, cx, cy, height, colour, label width, rows, hidden count
const nodes = [
  ['', 445, 359, 28, 'yellow', 1, ASQ.slice(0, 4)],
  ['', 445, 488.7, 32, 'teal', 1, ASQ],
  ['', 445, 626.5, 27, 'grey', 1, [['r', 'training_2']]],
  ['mrcnn_class', 706, 359, 27.5, 'grey', 90],
  ['output_rois', 942.5, 359, 27.5, 'grey', 90],
  ['mrcnn_class_logits', 662, 488.5, 32, 'orange', 90, SQ, 1],
  ['lambda_4', 864, 488.5, 32, 'grey', 90],
  ['proposal_targets', 1174.5, 488.5, 106, 'grey', 90, [...T3, ['v', 'roi_align_cl...'], ['v', 'roi_align_m...']], 0, 28],
  ['lambda_1', 1065, 626.3, 33.5, 'grey', 90],
  ['pool_squee...', 1016.5, 727, 28.5, 'grey', 88, T3],
  ['mrcnn_class_l...', 1349.5, 359, 48.5, 'grey', 86, T4],
  ['mrcnn_bbox_l...', 1578, 359, 55, 'grey', 89, T4],
  ['mrcnn_mask_...', 1780, 359, 66, 'grey', 89.5, T4],
  ['mrcnn_bbox', 1573.5, 488.5, 28, 'green', 90, T3],
  ['mrcnn_mask', 1776, 488.5, 32, 'grey', 91, SQ, 1],
  ['ROI', 1371.5, 626.3, 83, 'grey', 90, T3, 0, 15],
  ['mrcnn_bbox...', 1573.5, 626.3, 33, 'orange', 90, SQ, 1],
  ['mrcnn_mask_de...', 1776, 626.3, 36.5, 'grey', 91, AS, 2],
  ['anchors', 1450.5, 727, 29, 'grey', 90, [['e', 'init', 1], ['s', 'IsVariableI...']], 0, 6],
  ['activation_35', 1016.5, 817.5, 27, 'blue', 90, T3],
  ['mrcnn_class_...', 1016.5, 923, 35, 'yellow', 88, AS, 1],
  ['mrcnn_class_co...', 1016.5, 1029, 32, 'teal', 90, AS, 2],
  ['activation_34', 1016.5, 1134, 27, 'blue', 90, T3],
  ['mrcnn_class_...', 1016.5, 1239.5, 35, 'yellow', 88, AS, 1],
  ['mrcnn_class_co...', 1060.5, 1345.5, 32, 'teal', 90, AS, 2],
  ['activation_40', 1776, 727, 27, 'blue', 90, T3],
  ['mrcnn_mask...', 1776, 818, 35, 'yellow', 88, AS, 1],
  ['mrcnn_mask_c...', 1776, 923.5, 32, 'teal', 90, AS, 2],
  ['activation_39', 1776, 1029, 27, 'blue', 90, T3],
  ['mrcnn_mask...', 1776, 1134.5, 35, 'yellow', 88, AS, 1],
  ['mrcnn_mask_c...', 1776, 1239.6, 32, 'teal', 90, AS, 2],
  ['activation_38', 1776, 1345, 27, 'blue', 90, T3],
  ['mrcnn_mask...', 1776, 1451, 35, 'yellow', 88, AS, 1],
  ['mrcnn_mask_c...', 1776, 1556.5, 32, 'teal', 90, AS, 2],
  ['activation_37', 1776, 1647, 27, 'blue', 90, T3],
  ['mrcnn_mask...', 1776, 1737.5, 35, 'yellow', 88, AS, 1],
  ['mrcnn_mask_c...', 1820, 1843, 32, 'teal', 90, AS, 2],
  ['rpn_class_loss', 2079, 1737.5, 45, 'grey', 89, T4],
  ['rpn_bbox_loss', 2369, 1737.5, 55.5, 'grey', 92, T4],
  ['loss', 2463.5, 1345.5, 29, 'pink', 90, [['e', 'group_deps', 1], ['r', 'training', 1]], 0, 6],
  ['loss_1', 2867.5, 1345.5, 29, 'pink', 90, [['e', 'group_deps...', 1], ['r', 'training_1', 1]], 0, 6],
  ['loss_2', 3085.5, 1345.5, 29, 'pink', 90, [['e', 'group_deps...', 1], ['r', 'training_2', 1]], 0, 6]
];
nodes.forEach(([label, cx, cy, h, color, lw, rows, more, spread]) => {
  const [fill, stroke] = PALETTE[color];
  if (rows) outs(cx + 53, cy, h, rows, more, spread);
  el('rect', { class: 'box', x: cx - 52.5, y: cy - h / 2, width: 105, height: h, rx: 8, fill, stroke });
  if (label) fitted('nlabel', label, cx, cy, lw, 15.7);
});

ins(1007.5, 1345.5, [['v', 'roi_align_cl...']], 1);
ins(1767, 1843, [['v', 'roi_align_m...']], 1);
ins(1318.5, 626.3, [['p', 'rpn_bbox'], ['p', 'rpn_class']], 1.45);
ins(2026, 1737.5, [['p', 'rpn_class_l...']], 1);
ins(2316, 1737.5, [['p', 'rpn_bbox']], 1);

// plain operations: label, cx, cy
const ops = [
  ['input_im...', 820, 626.5], ['input_gt_...', 943, 626.5], ['input_gt_...', 1140.3, 626.5],
  ['input_im...', 660, 727], ['input_gt_...', 727, 727],
  ['input_rpn...', 2016.6, 1843], ['input_rpn...', 2237.3, 1843],
  ['AddN', 2224, 1451], ['AddN_1', 2816.3, 1451], ['AddN_2', 3038, 1451], ['add', 2906, 1647]
];
ops.forEach(([label, cx, cy]) => {
  el('ellipse', { class: 'op', cx, cy, rx: 13.4, ry: 5.3 });
  fitted('nlabel', label, cx, cy - 13.6, 90, 10.5);
});
outs(833.5, 626.5, 0, [['v', 'roi_align_cl...'], ['v', 'roi_align_m...']], 0, 0);
arrow(2877, 1647, 2892, 1647);
arrow(2919.5, 1647, 2936, 1647);
glyph('r', 2937, 1647);
el('text', { class: 'alabel', x: 2962, y: 1650.1 }, 'training');
el('circle', { class: 'op const', cx: 2872, cy: 1647, r: 3.7 });
el('text', { class: 'alabel', x: 2860.500, y: 1650 }, 'x');

// series: label, first ellipse cx, cy
[['truediv[0-251]', 2796, 1556.5], ['add[17-267]', 2541.5, 1647], ['Cast[0-251]', 2680, 1647],
 ['Sum[0-251]', 2789, 1737.5], ['mul[0-281]', 3006, 1843]].forEach(([label, cx, cy]) => {
  [14, 7, 0].forEach(o => el('ellipse', { class: 'op', cx: cx + o, cy, rx: 13.4, ry: 5.3 }));
  fitted('nlabel', label, cx + 7, cy - 17.5, 120, 14);
});
outs(2569.5, 1647, 0, T3, 0, 0);
outs(2708.5, 1647, 0, T3, 0, 0);

// mul neighbours
outs(3034, 1843, 8, [['e', 'group_deps', 1], ['e', 'group_deps...', 1], ['e', 'group_deps...', 1], ['r', 'training_2', 1], ['r', 'training_1', 1]], 1, 3);
[['Square[0-2...', 1837], ['Mean[0-29]', 1849]].forEach(([t, y]) => {
  glyph('s', 2949.5, y);
  arrow(2974, y, 2991, 1843);
  el('text', { class: 'alabel', x: 2945.5, y: y + 3.1, 'text-anchor': 'end' }, t);
});
```
